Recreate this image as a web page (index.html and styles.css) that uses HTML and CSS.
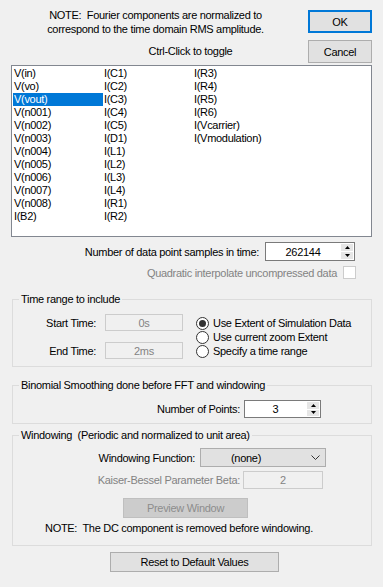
FILE: index.html
```html
<!DOCTYPE html>
<html lang="en">

<head>
    <meta charset="UTF-8">
    <meta name="viewport" content="width=device-width, initial-scale=1.0">
    <title>FFT Options</title>
    <link rel="stylesheet" href="styles.css">
</head>

<body>
    <div class="header">
        <div class="header-text">
            <p class="note">NOTE:&nbsp; Fourier components are normalized to<br>correspond to the time domain RMS amplitude.</p>
            <p class="hint">Ctrl-Click to toggle</p>
        </div>
        <div class="header-buttons">
            <button class="btn btn-default">OK</button>
            <button class="btn">Cancel</button>
        </div>
    </div>

    <div class="trace-list">
        <div class="trace">V(in)</div>
        <div class="trace">V(vo)</div>
        <div class="trace selected">V(vout)</div>
        <div class="trace">V(n001)</div>
        <div class="trace">V(n002)</div>
        <div class="trace">V(n003)</div>
        <div class="trace">V(n004)</div>
        <div class="trace">V(n005)</div>
        <div class="trace">V(n006)</div>
        <div class="trace">V(n007)</div>
        <div class="trace">V(n008)</div>
        <div class="trace">I(B2)</div>
        <div class="trace">I(C1)</div>
        <div class="trace">I(C2)</div>
        <div class="trace">I(C3)</div>
        <div class="trace">I(C4)</div>
        <div class="trace">I(C5)</div>
        <div class="trace">I(D1)</div>
        <div class="trace">I(L1)</div>
        <div class="trace">I(L2)</div>
        <div class="trace">I(L3)</div>
        <div class="trace">I(L4)</div>
        <div class="trace">I(R1)</div>
        <div class="trace">I(R2)</div>
        <div class="trace">I(R3)</div>
        <div class="trace">I(R4)</div>
        <div class="trace">I(R5)</div>
        <div class="trace">I(R6)</div>
        <div class="trace">I(Vcarrier)</div>
        <div class="trace">I(Vmodulation)</div>
    </div>

    <div class="samples-row">
        <label>Number of data point samples in time:</label>
        <div class="spin-field samples-field">
            <input type="text" value="262144">
            <div class="spin">
                <span><svg width="5" height="3"><polygon points="0,3 2.5,0 5,3" fill="#000"/></svg></span>
                <span><svg width="5" height="3"><polygon points="0,0 2.5,3 5,0" fill="#000"/></svg></span>
            </div>
        </div>
    </div>

    <div class="check-row">
        <span>Quadratic interpolate uncompressed data</span>
        <div class="checkbox"></div>
    </div>

    <fieldset class="group time-group">
        <legend>Time range to include</legend>
        <div class="time-body">
            <div class="time-fields">
                <label>Start Time:</label>
                <input type="text" class="field-disabled" value="0s" disabled>
                <label>End Time:</label>
                <input type="text" class="field-disabled" value="2ms" disabled>
            </div>
            <div class="radios">
                <div class="radio"><span class="radio-dot checked"></span>Use Extent of Simulation Data</div>
                <div class="radio"><span class="radio-dot"></span>Use current zoom Extent</div>
                <div class="radio"><span class="radio-dot"></span>Specify a time range</div>
            </div>
        </div>
    </fieldset>

    <fieldset class="group smooth-group">
        <legend>Binomial Smoothing done before FFT and windowing</legend>
        <div class="points-row">
            <label class="points-label">Number of Points:</label>
            <div class="spin-field points-field">
                <input type="text" value="3">
                <div class="spin">
                    <span><svg width="5" height="3"><polygon points="0,3 2.5,0 5,3" fill="#000"/></svg></span>
                    <span><svg width="5" height="3"><polygon points="0,0 2.5,3 5,0" fill="#000"/></svg></span>
                </div>
            </div>
        </div>
    </fieldset>

    <fieldset class="group window-group">
        <legend>Windowing&nbsp; (Periodic and normalized to unit area)</legend>
        <div class="wf-row">
            <label class="wf-label">Windowing Function:</label>
            <div class="select">
                <span class="select-value">(none)</span>
                <svg width="9" height="5"><polyline points="0.5,0.5 4.5,4.5 8.5,0.5" fill="none" stroke="#333" stroke-width="1"/></svg>
            </div>
        </div>
        <div class="kb-row">
            <label class="kb-label">Kaiser-Bessel Parameter Beta:</label>
            <input type="text" class="field-disabled kb-field" value="2" disabled>
        </div>
        <button class="btn-disabled preview-btn" disabled>Preview Window</button>
        <p class="dc-note">NOTE:&nbsp; The DC component is removed before windowing.</p>
    </fieldset>

    <button class="btn reset-btn">Reset to Default Values</button>
</body>

</html>
```

FILE: styles.css
```css
body {
    margin: 0;
    width: 383px;
    background-color: #F0F0F0;
    font-family: "Liberation Sans", Arial, sans-serif;
    font-size: 11px;
    letter-spacing: -0.3px;
    color: #000;
}

/* top note + dialog buttons */
.header {
    display: flex;
    height: 63px;
}

.header-text {
    width: 289px;
    margin-left: 11px;
    text-align: center;
}

.note {
    margin: 0;
    padding-top: 8px;
    line-height: 14px;
}

.hint {
    margin: 8px 0 0;
    padding-left: 70px;
    line-height: 14px;
}

.header-buttons {
    display: flex;
    flex-direction: column;
    gap: 7px;
    margin-left: 8px;
    padding-top: 10px;
}

.btn {
    width: 64px;
    height: 23px;
    box-sizing: border-box;
    padding: 0;
    background-color: #E1E1E1;
    border: 1px solid #ADADAD;
    font: inherit;
    letter-spacing: inherit;
    color: #000;
}

.btn-default {
    border-color: #0078D7;
    box-shadow: inset 0 0 0 1px #0078D7;
}

/* trace list */
.trace-list {
    margin: 2px 11px 0 11px;
    height: 172px;
    box-sizing: border-box;
    border: 1px solid #828790;
    background-color: #fff;
    padding: 1px 0 0 1px;
    display: grid;
    grid-template-rows: repeat(12, 13px);
    grid-auto-flow: column;
    grid-auto-columns: 90px;
}

.trace {
    line-height: 13px;
    padding-left: 1px;
    white-space: nowrap;
}

.trace.selected {
    background-color: #0078D7;
    color: #fff;
}

/* number fields with spinner */
.samples-row {
    display: flex;
    justify-content: flex-end;
    align-items: center;
    margin: 5px 28px 0 0;
}

.samples-row label {
    margin-right: 6px;
}

.spin-field {
    display: flex;
    box-sizing: border-box;
    border: 1px solid #7A7A7A;
    background-color: #fff;
}

.samples-field {
    width: 90px;
    height: 19px;
}

.spin-field input {
    flex: 1;
    min-width: 0;
    border: 0;
    padding: 0;
    background: transparent;
    text-align: center;
    font: inherit;
    letter-spacing: inherit;
    color: #000;
    outline: none;
}

.spin {
    width: 12px;
    margin: 1px;
    display: flex;
    flex-direction: column;
    gap: 1px;
}

.spin span {
    flex: 1;
    display: flex;
    align-items: center;
    justify-content: center;
    background-color: #E6E6E6;
}

.spin svg {
    display: block;
}

.check-row {
    display: flex;
    justify-content: flex-end;
    align-items: center;
    height: 13px;
    margin: 5px 27px 0 0;
    color: #838383;
}

.checkbox {
    width: 13px;
    height: 13px;
    box-sizing: border-box;
    margin-left: 6px;
    border: 1px solid #CCCCCC;
    background-color: #fff;
}

/* group boxes */
.group {
    margin: 0 11px 0 12px;
    padding: 0;
    min-width: 0;
    border: 1px solid #DCDCDC;
}

.group legend {
    margin-left: 6px;
    padding: 0 2px;
    line-height: 13px;
}

.field-disabled {
    box-sizing: border-box;
    padding: 0;
    border: 1px solid #CCCCCC;
    background-color: #F0F0F0;
    color: #838383;
    text-align: center;
    font: inherit;
    letter-spacing: inherit;
}

.time-group {
    margin-top: 14px;
}

.time-body {
    display: flex;
    padding: 8px 0 7px;
}

.time-fields {
    display: grid;
    grid-template-columns: 83px 78px;
    column-gap: 9px;
    row-gap: 11px;
    align-items: center;
}

.time-fields label {
    text-align: right;
}

.time-fields .field-disabled {
    width: 78px;
    height: 17px;
}

.radios {
    display: flex;
    flex-direction: column;
    margin-left: 13px;
    padding-top: 2px;
}

.radio {
    display: flex;
    align-items: center;
    gap: 4px;
    height: 14px;
}

.radio-dot {
    width: 13px;
    height: 13px;
    box-sizing: border-box;
    border: 1px solid #333;
    border-radius: 50%;
    background-color: #fff;
    display: flex;
    align-items: center;
    justify-content: center;
}

.radio-dot.checked::after {
    content: "";
    width: 7px;
    height: 7px;
    border-radius: 50%;
    background-color: #333;
}

.smooth-group {
    margin-top: 12px;
}

.points-row {
    display: flex;
    align-items: center;
    padding: 8px 0 5px;
}

.points-label {
    width: 227px;
    text-align: right;
}

.points-field {
    width: 77px;
    height: 18px;
    margin-left: 4px;
}

.window-group {
    margin-top: 5px;
    padding-bottom: 10px;
}

.wf-row {
    display: flex;
    align-items: center;
    margin-top: 6px;
}

.wf-label {
    width: 182px;
    text-align: right;
}

.select {
    width: 126px;
    height: 19px;
    margin-left: 5px;
    box-sizing: border-box;
    border: 1px solid #ADADAD;
    background-color: #E1E1E1;
    display: flex;
    align-items: center;
}

.select-value {
    width: 90px;
    text-align: center;
}

.select svg {
    margin-left: auto;
    margin-right: 5px;
}

.kb-row {
    display: flex;
    align-items: center;
    margin-top: 4px;
}

.kb-label {
    width: 227px;
    text-align: right;
    color: #838383;
}

.kb-field {
    width: 80px;
    height: 18px;
    margin-left: 3px;
}

.btn-disabled {
    display: block;
    box-sizing: border-box;
    padding: 0;
    background-color: #CCCCCC;
    border: 1px solid #BFBFBF;
    color: #8C8C8C;
    font: inherit;
    letter-spacing: inherit;
}

.preview-btn {
    width: 125px;
    height: 20px;
    margin: 9px 0 0 110px;
}

.dc-note {
    margin: 4px 0 0;
    padding-left: 32px;
    line-height: 13px;
}

.reset-btn {
    display: block;
    width: 169px;
    height: 20px;
    margin: 6px 0 0 110px;
}
```
